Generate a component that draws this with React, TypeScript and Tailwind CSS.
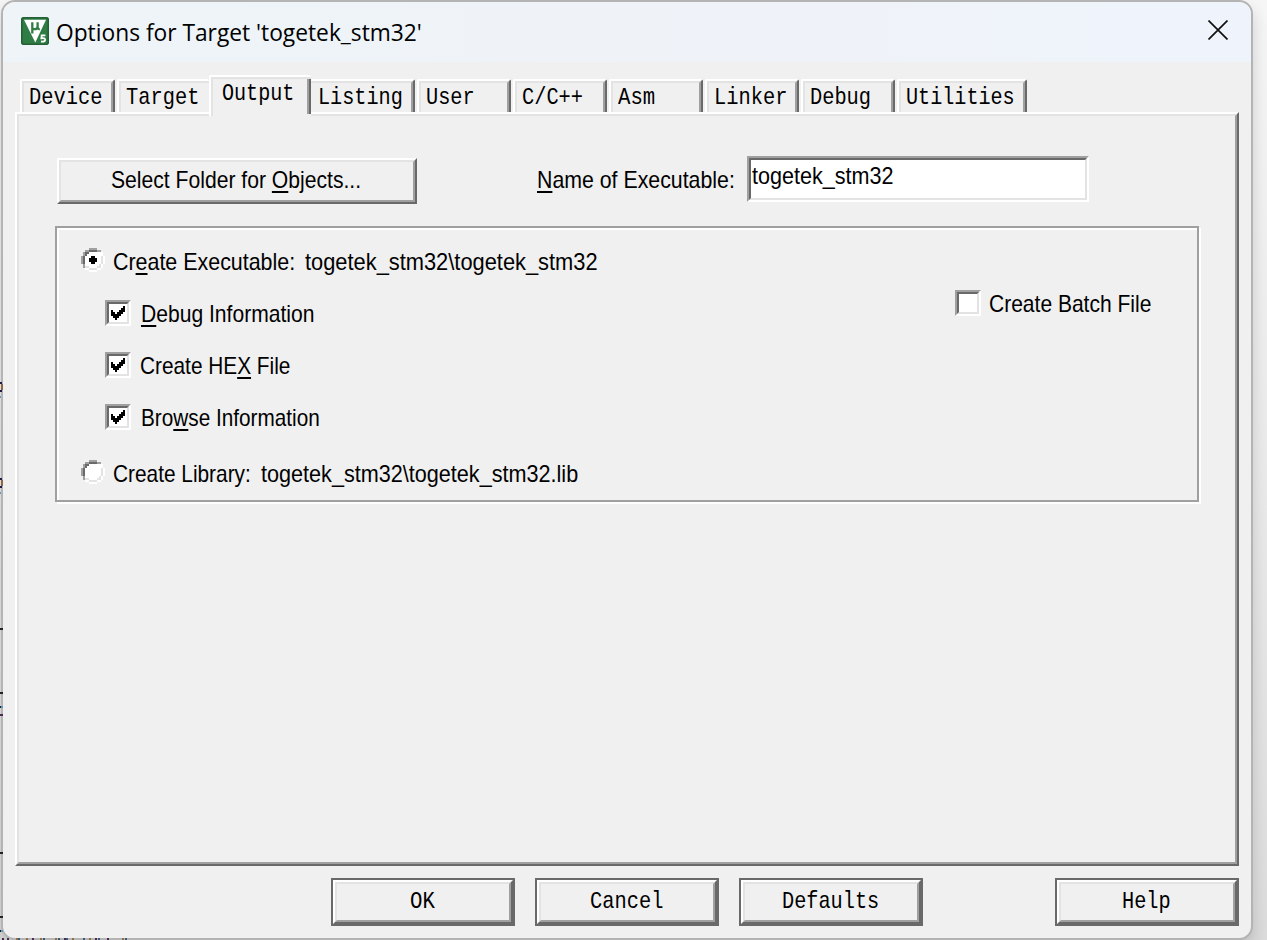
import { useLayoutEffect, useRef, useState } from "react";
import type { ReactNode } from "react";

/** Single line of text condensed or stretched to an exact width. */
function Fit({ w, className = "", children }: { w: number; className?: string; children: ReactNode }) {
  const ref = useRef<HTMLSpanElement>(null);
  const [k, setK] = useState(1);
  useLayoutEffect(() => {
    if (ref.current) setK(w / ref.current.offsetWidth);
  }, [w]);
  return (
    <span className={`block h-7 shrink-0 whitespace-pre leading-7 ${className}`} style={{ width: w }}>
      <span ref={ref} className="inline-block origin-left" style={{ transform: `scaleX(${k})` }}>
        {children}
      </span>
    </span>
  );
}

const SANS = "font-['Liberation_Sans',sans-serif] text-[24px] text-black";
const MONO = "font-['Liberation_Mono',monospace] text-[24px] text-black";

function Key({ children }: { children: ReactNode }) {
  return <span className="underline decoration-2 underline-offset-[3px] [text-decoration-skip-ink:none]">{children}</span>;
}

function Logo() {
  return (
    <svg width="28" height="28" viewBox="0 0 28 28">
      <rect width="28" height="28" rx="3" fill="#2f7d45" />
      <rect x="0.75" y="0.75" width="26.5" height="26.5" rx="2.3" fill="none" stroke="#245f36" strokeWidth="1.5" />
      <path d="M3 2.8H25L14.3 25.5Z" fill="#fff" />
      <path d="M11.3 5.2V16.5M11.3 5.2V10.2Q11.3 12.2 13.6 12.2Q16.6 12.2 16.6 9.4V5.2M16.6 10Q16.6 12.3 18.8 12" fill="none" stroke="#2f7d45" strokeWidth="2.3" />
      <path d="M24.4 18.4H20.7L20.4 21.3Q24.2 20.7 24.1 22.9Q23.9 25.2 20 24.5" fill="none" stroke="#2f7d45" strokeWidth="3.6" />
      <path d="M24.4 18.4H20.7L20.4 21.3Q24.2 20.7 24.1 22.9Q23.9 25.2 20 24.5" fill="none" stroke="#fff" strokeWidth="1.8" />
    </svg>
  );
}

function Tab({ label, chars, width, hideRight, hideLeft }: { label: string; chars: number; width: string; hideRight?: boolean; hideLeft?: boolean }) {
  return (
    <div
      className={`h-[33px] shrink-0 rounded-t-[2px] border-t-2 border-t-white border-l-white border-r-[#696969] ${hideLeft ? "" : "border-l-2"} ${hideRight ? "" : "border-r-2"} ${width}`}
    >
      <div
        className={`h-full border-t-2 border-t-[#e3e3e3] border-l-[#e3e3e3] border-r-[#a0a0a0] pt-px ${hideLeft ? "pl-[7px]" : "border-l-2 pl-[5px]"} ${hideRight ? "" : "border-r-2"}`}
      >
        <Fit w={chars * 12 + 1} className={MONO}>{label}</Fit>
      </div>
    </div>
  );
}

function Check({ checked }: { checked?: boolean }) {
  return (
    <div className="size-[26px] shrink-0 border-2 border-t-[#a0a0a0] border-r-white border-b-white border-l-[#a0a0a0]">
      <div className="size-[22px] border-2 border-t-[#696969] border-r-[#e3e3e3] border-b-[#e3e3e3] border-l-[#696969] bg-white">
        {checked && (
          <svg width="18" height="18" viewBox="0 0 18 18" shapeRendering="crispEdges">
            <path d="M2 6h2v2h2v2h2v-2h2v-2h2v-2h2v-2h2v6h-2v2h-2v2h-2v2h-2v2h-2v-2h-2v-2h-2z" fill="#000" />
          </svg>
        )}
      </div>
    </div>
  );
}

function Radio({ checked }: { checked?: boolean }) {
  return (
    <svg width="24" height="24" viewBox="0 0 24 24" className="shrink-0" shapeRendering="crispEdges">
      <path d="M8 2h8v2h4v4h2v8h-2v4h-4v2h-8v-2h-4v-4h-2v-8h2v-4h4z" fill="#fff" />
      <path d="M8 0h8v2h4v2h-4v-2h-8v2h-4v4h-2v8h2v4h-2v-4h-2v-8h2v-4h2v-2h4z" fill="#a0a0a0" />
      <path d="M8 2h8v2h-8v2h-2v2h-2v8h-2v-8h2v-4h4z" fill="#696969" />
      <path d="M20 4h2v4h2v8h-2v4h-2v2h-4v2h-8v-2h-4v-2h4v2h8v-2h4v-4h2v-8h-2z" fill="#fff" />
      <path d="M20 8h2v8h-2v4h-4v2h-8v-2h-4v-2h4v2h8v-2h2v-2h2z" fill="#e3e3e3" />
      {checked && <path d="M10 8h4v2h2v4h-2v2h-4v-2h-2v-4h2z" fill="#000" />}
    </svg>
  );
}

function PushButton({ label }: { label: string }) {
  return (
    <button className="h-12 w-[184px] shrink-0 border-2 border-[#696969]">
      <div className="h-full border-2 border-t-white border-r-[#696969] border-b-[#696969] border-l-white">
        <div className="flex h-full justify-center border-2 border-t-[#e3e3e3] border-r-[#a0a0a0] border-b-[#a0a0a0] border-l-[#e3e3e3] pt-[4px] pr-[2px]">
          <Fit w={label.length * 12 + 1} className={`${MONO} text-left`}>{label}</Fit>
        </div>
      </div>
    </button>
  );
}

/** Fragments of the editor window that show at the dialog's left and bottom edges. */
function EditorFragments() {
  return (
    <svg className="pointer-events-none absolute top-0 left-0" width="140" height="940" viewBox="0 0 140 940" shapeRendering="crispEdges">
      <path d="M0 382h2v2h-2zM0 390h2v2h-2zM0 478h2v2h-2zM0 486h2v2h-2z" fill="#1c1c48" />
      <path d="M1 384h2v6h-2zM1 480h2v6h-2z" fill="#8c6446" />
      <path d="M0 396h1v2h-1zM0 492h1v2h-1zM1 706h2v2h-2zM1 930h2v2h-2z" fill="#5a9cc4" />
      <path d="M0 628h3v2h-3zM0 692h3v2h-3zM0 706h1v2h-1zM0 852h3v2h-3zM0 916h3v2h-3zM0 930h1v2h-1z" fill="#222" />
      <path d="M0 714h3v2h-3zM2 938h2v2h-2zM7 938h2v2h-2zM32 938h2v2h-2zM64 938h2v2h-2zM95 938h2v2h-2zM107 938h2v2h-2z" fill="#4c2a50" />
      <path d="M16 938h2v2h-2zM26 938h2v2h-2zM40 938h2v2h-2zM55 938h2v2h-2zM72 938h2v2h-2zM89 938h2v2h-2zM122 938h2v2h-2z" fill="#937044" />
      <path d="M18 938h2v2h-2zM43 938h2v2h-2zM58 938h2v2h-2zM66 938h2v2h-2zM83 938h2v2h-2zM98 938h2v2h-2zM125 938h2v2h-2z" fill="#365b7b" />
    </svg>
  );
}

export default function App() {
  return (
    <div className="relative h-[940px] w-[1267px] overflow-hidden bg-linear-to-b from-[#f6f6f6] via-[#ebebeb] to-[#dcdcdc] pl-px">
      <div className="flex h-[940px] w-[1252px] flex-col rounded-[14px] border-2 border-[#b4b4b4] bg-[#f0f0f0] shadow-[0_8px_16px_rgba(0,0,0,0.16)]">
        <header className="flex h-[60px] shrink-0 rounded-t-[12px] bg-linear-to-r from-[#eef4f8] via-[#eff3f8] to-[#eff3fb] pr-[23px] pl-[18px]">
          <div className="mt-[15px]"><Logo /></div>
          <Fit w={366} className="mt-4 ml-[7px] font-['Open_Sans',sans-serif] text-[24px] text-black">Options for Target 'togetek_stm32'</Fit>
          <svg className="mt-[18px] ml-auto" width="20" height="20" viewBox="0 0 20 20">
            <path d="M.5.5l19 19M19.5.5l-19 19" stroke="#111" strokeWidth="1.7" />
          </svg>
        </header>

        <div className="flex h-[50px] shrink-0 items-end pl-[17px]">
          <Tab label="Device" chars={6} width="w-[95px] mr-[2px]" />
          <Tab label="Target" chars={6} width="w-[92px]" hideRight />
          <div className="relative -mb-1 h-[41px] w-[102px] shrink-0 rounded-t-[2px] border-t-2 border-l-2 border-white bg-[#f0f0f0]">
            <div className="flex h-full justify-between border-t-2 border-l-2 border-[#e3e3e3] pl-[9px]">
              <Fit w={72} className={`${MONO} mt-px`}>Output</Fit>
              <div className="h-[35px] w-1 border-r-2 border-[#696969] bg-[#a0a0a0]" />
            </div>
          </div>
          <Tab label="Listing" chars={7} width="w-[104px] mr-[2px]" hideLeft />
          <Tab label="User" chars={4} width="w-[94px] mr-[2px]" />
          <Tab label="C/C++" chars={5} width="w-[94px] mr-[2px]" />
          <Tab label="Asm" chars={3} width="w-[94px] mr-[2px]" />
          <Tab label="Linker" chars={6} width="w-[94px] mr-[2px]" />
          <Tab label="Debug" chars={5} width="w-[94px] mr-[2px]" />
          <Tab label="Utilities" chars={9} width="w-[130px]" />
        </div>

        <main className="ml-3 h-[754px] w-[1224px] shrink-0 border-2 border-t-white border-r-[#696969] border-b-[#696969] border-l-white">
          <div className="h-full border-2 border-t-[#e3e3e3] border-r-[#a0a0a0] border-b-[#a0a0a0] border-l-[#e3e3e3] pt-10 pl-9">
            <div className="flex h-[70px] items-start pl-[2px]">
              <button className="mt-[2px] h-[46px] w-[360px] border-2 border-t-white border-r-[#696969] border-b-[#696969] border-l-white">
                <div className="h-full border-2 border-t-[#e3e3e3] border-r-[#a0a0a0] border-b-[#a0a0a0] border-l-[#e3e3e3] pt-1 pl-[50px] text-left">
                  <Fit w={250} className={SANS}>Select Folder for <Key>O</Key>bjects...</Fit>
                </div>
              </button>
              <Fit w={198} className={`${SANS} mt-[10px] ml-[120px]`}><Key>N</Key>ame of Executable:</Fit>
              <div className="ml-[12px] h-[46px] w-[342px] border-2 border-t-[#a0a0a0] border-r-white border-b-white border-l-[#a0a0a0]">
                <div className="h-full border-2 border-t-[#696969] border-r-[#e3e3e3] border-b-[#e3e3e3] border-l-[#696969] bg-white pt-[2px] pl-px">
                  <Fit w={141} className={SANS}>togetek_stm32</Fit>
                </div>
              </div>
            </div>

            <section className="flex h-[276px] w-[1144px] justify-between border-2 border-[#a0a0a0] pr-[46px] pl-6 shadow-[2px_2px_0_#fff,inset_2px_2px_0_#fff]">
              <div>
                <div className="flex h-[72px] pt-5">
                  <Radio checked />
                  <Fit w={182} className={`${SANS} ml-2`}>Cr<Key>e</Key>ate Executable:</Fit>
                  <Fit w={293} className={`${SANS} ml-[10px]`}>togetek_stm32\togetek_stm32</Fit>
                </div>
                <div className="flex h-[52px] pl-6">
                  <Check checked />
                  <Fit w={173} className={`${SANS} ml-[10px]`}><Key>D</Key>ebug Information</Fit>
                </div>
                <div className="flex h-[52px] pl-6">
                  <Check checked />
                  <Fit w={150} className={`${SANS} ml-[9px]`}>Create HE<Key>X</Key> File</Fit>
                </div>
                <div className="flex h-[56px] pl-6">
                  <Check checked />
                  <Fit w={179} className={`${SANS} ml-[10px]`}>Bro<Key>w</Key>se Information</Fit>
                </div>
                <div className="flex">
                  <Radio />
                  <Fit w={138} className={`${SANS} ml-2`}>Create Library:</Fit>
                  <Fit w={317} className={`${SANS} ml-[10px]`}>togetek_stm32\togetek_stm32.lib</Fit>
                </div>
              </div>
              <div className="flex pt-[62px]">
                <Check />
                <Fit w={162} className={`${SANS} ml-[8px]`}>Create Batch File</Fit>
              </div>
            </section>
          </div>
        </main>

        <footer className="flex gap-5 pt-3 pr-3 pl-[328px]">
          <PushButton label="OK" />
          <PushButton label="Cancel" />
          <PushButton label="Defaults" />
          <div className="ml-auto"><PushButton label="Help" /></div>
        </footer>
      </div>
      <EditorFragments />
    </div>
  );
}
